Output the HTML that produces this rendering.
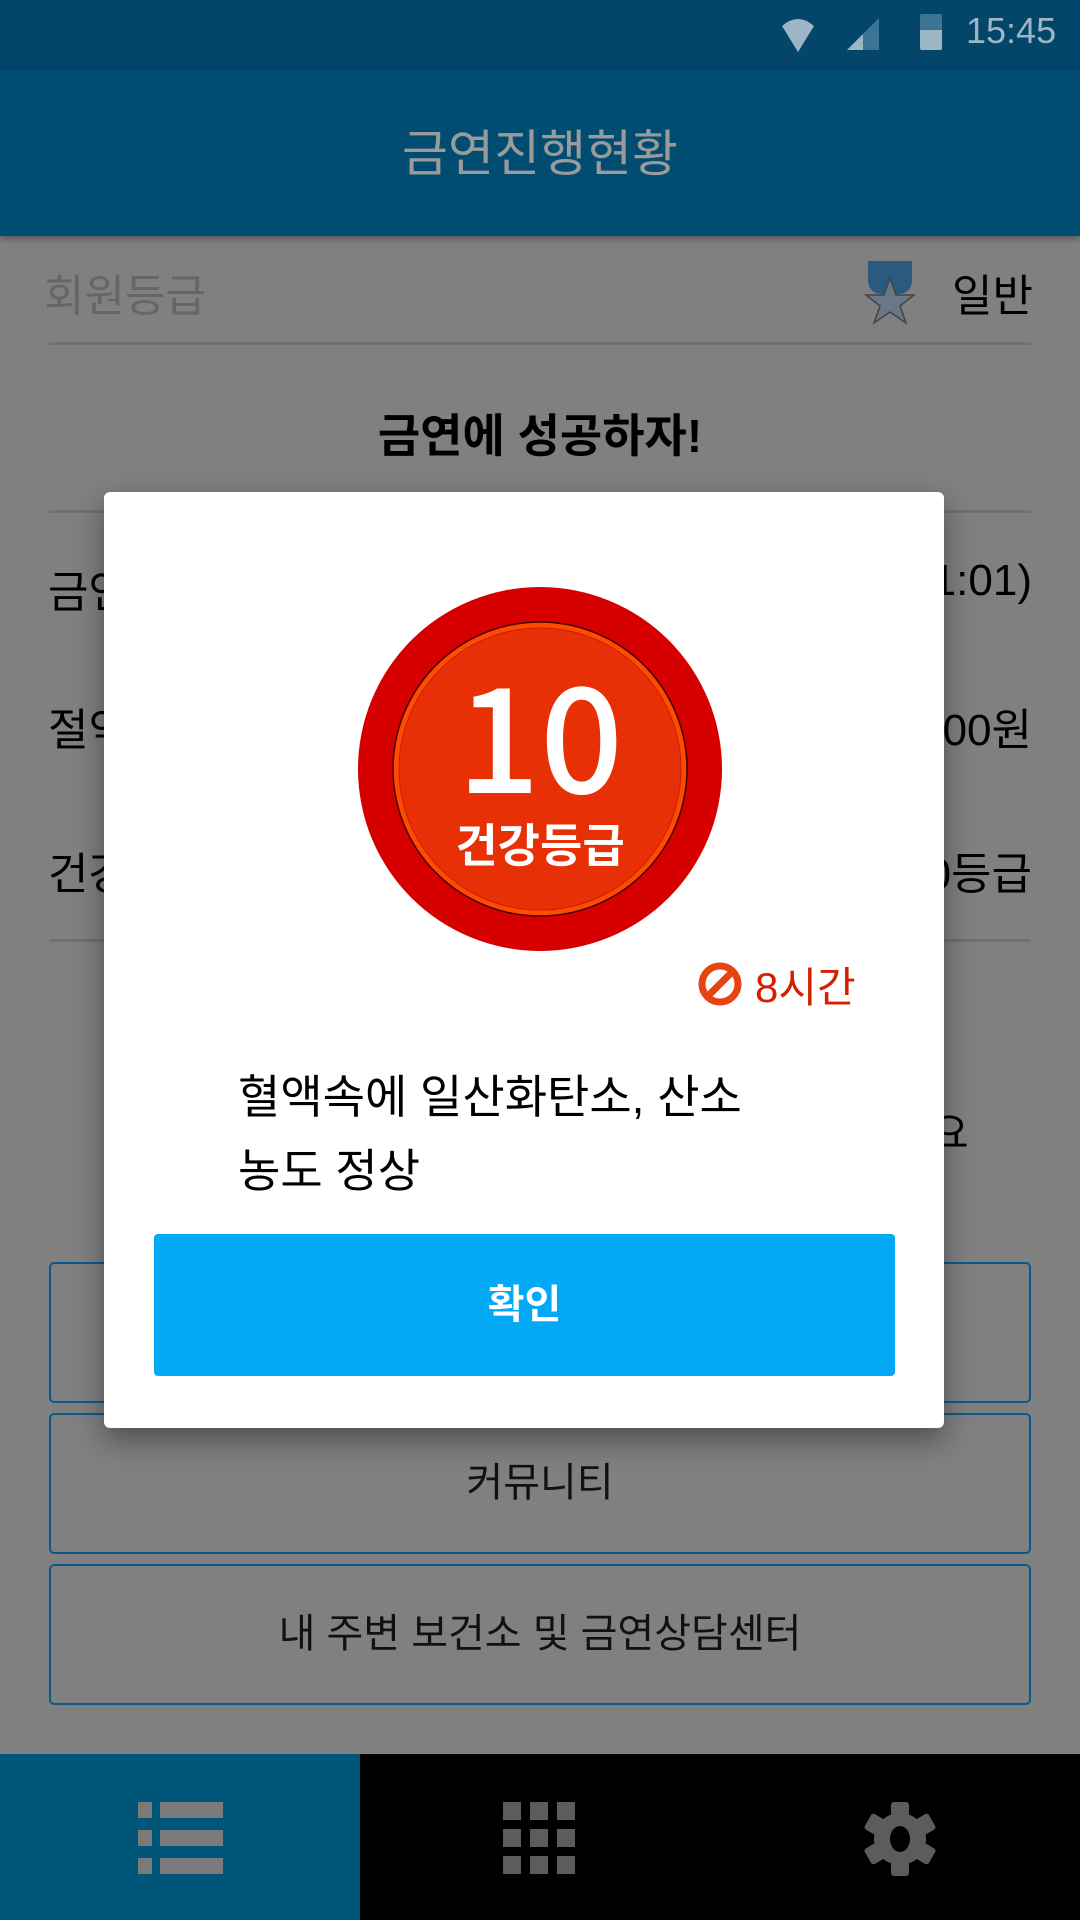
<!DOCTYPE html>
<html><head><meta charset="utf-8">
<style>
*{margin:0;padding:0;box-sizing:border-box}
body{width:1080px;height:1920px;position:relative;overflow:hidden;background:#808080;font-family:"Liberation Sans","Noto Sans CJK KR",sans-serif}
.a{position:absolute;white-space:nowrap}
.div{position:absolute;left:49px;width:982px;height:3px;background:#707070}
.btn{position:absolute;left:49px;width:982px;height:141px;border:2px solid #0c5a8c;border-radius:5px;text-align:center;line-height:137px;font-size:40px;color:#111}
</style></head><body>
<div class="a" style="left:0;top:0;width:1080px;height:70px;background:#03466a"></div>
<svg class="a" style="left:780px;top:14px" width="60" height="40"><path d="M2 12 Q18 -2 34 12 L18 38 Z" fill="#9db6c6"/></svg>
<svg class="a" style="left:845px;top:14px" width="40" height="40"><path d="M2 36 L34 4 L34 36 Z" fill="#3c7496"/><path d="M2 36 L18 20 L18 36 Z" fill="#9db6c6"/></svg>
<div class="a" style="left:920px;top:14px;width:22px;height:36px;background:#3c7496;border-radius:2px"></div>
<div class="a" style="left:920px;top:30px;width:22px;height:20px;background:#9db6c6;border-radius:0 0 2px 2px"></div>
<div class="a" style="left:966px;top:10px;font-size:36px;color:#9db6c6">15:45</div>
<div class="a" style="left:0;top:70px;width:1080px;height:166px;background:#014d72;box-shadow:0 3px 6px rgba(0,0,0,.3)"></div>
<div class="a" style="left:0;top:114px;width:1080px;text-align:center;font-size:50px;color:#9a9a9a">금연진행현황</div>
<div class="a" style="left:44px;top:260px;font-size:44px;color:#666">회원등급</div>
<svg class="a" style="left:862px;top:258px" width="56" height="68"><path d="M6 3 H50 V22 Q50 34 38 36 H18 Q6 34 6 22 Z" fill="#2a5a80"/><path d="M28 20 L34 37 L52 37 L38 48 L44 65 L28 54 L12 65 L18 48 L4 37 L22 37 Z" fill="#687888" stroke="#444" stroke-width="1.5"/></svg>
<div class="a" style="left:952px;top:260px;font-size:44px;color:#000">일반</div>
<div class="div" style="top:342px"></div>
<div class="a" style="left:0;top:400px;width:1080px;text-align:center;font-size:46px;font-weight:bold;color:#000">금연에 성공하자!</div>
<div class="div" style="top:510px"></div>
<div class="a" style="left:48px;top:556px;font-size:44px;color:#000">금연</div>
<div class="a" style="right:48px;top:556px;font-size:44px;color:#000">1:01)</div>
<div class="a" style="left:48px;top:694px;font-size:44px;color:#000">절약</div>
<div class="a" style="right:48px;top:694px;font-size:44px;color:#000">00원</div>
<div class="a" style="left:48px;top:838px;font-size:44px;color:#000">건강</div>
<div class="a" style="right:48px;top:838px;font-size:44px;color:#000">0등급</div>
<div class="div" style="top:939px"></div>
<div class="a" style="left:930px;top:1100px;font-size:42px;color:#000">요</div>
<div class="btn" style="top:1262px"></div>
<div class="btn" style="top:1413px">커뮤니티</div>
<div class="btn" style="top:1564px">내 주변 보건소 및 금연상담센터</div>
<div class="a" style="left:0;top:1754px;width:360px;height:166px;background:#005679"></div>
<div class="a" style="left:360px;top:1754px;width:720px;height:166px;background:#000"></div>
<svg class="a" style="left:136px;top:1800px" width="90" height="76" fill="#7a7a7a"><rect x="2" y="2" width="14" height="16"/><rect x="24" y="2" width="63" height="16"/><rect x="2" y="30" width="14" height="16"/><rect x="24" y="30" width="63" height="16"/><rect x="2" y="58" width="14" height="16"/><rect x="24" y="58" width="63" height="16"/></svg>
<svg class="a" style="left:503px;top:1802px" width="74" height="74" fill="#5c5c5c"><rect x="0" y="0" width="18" height="18"/><rect x="27" y="0" width="18" height="18"/><rect x="54" y="0" width="18" height="18"/><rect x="0" y="27" width="18" height="18"/><rect x="27" y="27" width="18" height="18"/><rect x="54" y="27" width="18" height="18"/><rect x="0" y="54" width="18" height="18"/><rect x="27" y="54" width="18" height="18"/><rect x="54" y="54" width="18" height="18"/></svg>
<svg class="a" style="left:864px;top:1802px" width="72" height="74" viewBox="-36 -37 72 74"><g fill="#5c5c5c"><circle r="26"/><rect x="-9" y="-37" width="18" height="74" rx="3"/><rect x="-9" y="-37" width="18" height="74" rx="3" transform="rotate(60)"/><rect x="-9" y="-37" width="18" height="74" rx="3" transform="rotate(-60)"/></g><ellipse rx="10" ry="13" fill="#000"/></svg>
<div class="a" style="left:104px;top:492px;width:840px;height:936px;background:#fff;border-radius:6px;box-shadow:0 12px 30px rgba(0,0,0,.4)"></div>
<svg class="a" style="left:358px;top:587px" width="364" height="364"><circle cx="182" cy="182" r="182" fill="#d60000"/><circle cx="182" cy="182" r="147" fill="#ff4a00" stroke="#400" stroke-width="1.5"/><circle cx="182" cy="182" r="141" fill="#e83006" stroke="#c42000" stroke-width="1"/></svg>
<div class="a" style="left:0;top:656px;width:1080px;text-align:center;font-size:146px;line-height:150px;color:#fff;font-family:'Noto Sans CJK KR',sans-serif;font-weight:500">10</div>
<div class="a" style="left:0;top:810px;width:1080px;text-align:center;font-size:46px;color:#fff;font-weight:bold">건강등급</div>
<svg class="a" style="left:698px;top:962px" width="44" height="44"><circle cx="22" cy="22" r="18" fill="none" stroke="#e84412" stroke-width="7"/><line x1="11" y1="33" x2="33" y2="11" stroke="#e84412" stroke-width="7"/></svg>
<div class="a" style="left:755px;top:954px;font-size:42px;color:#d42000">8시간</div>
<div class="a" style="left:238px;top:1060px;font-size:46px;line-height:74px;color:#000">혈액속에 일산화탄소, 산소<br>농도 정상</div>
<div class="a" style="left:154px;top:1234px;width:741px;height:142px;background:#03a9f4;border-radius:4px;text-align:center;line-height:142px;font-size:40px;color:#fff;font-weight:bold">확인</div>
</body></html>
